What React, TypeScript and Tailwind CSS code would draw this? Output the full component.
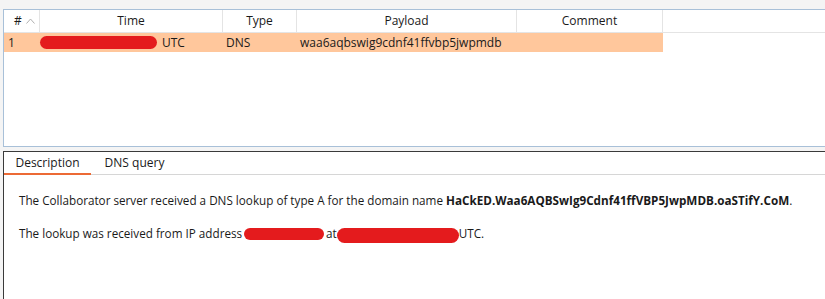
import React from 'react';

const font = { fontFamily: '"Open Sans", "Noto Sans", sans-serif' };

const columns = [
  { label: 'Time', width: 'w-[183px]' },
  { label: 'Type', width: 'w-[74px]' },
  { label: 'Payload', width: 'w-[220px]' },
  { label: 'Comment', width: 'w-[146px]' },
];

function Scribble({ className }: { className: string }) {
  return <span className={'inline-block rounded-full bg-[#e41b1d] align-middle ' + className} />;
}

export default function App() {
  return (
    <div
      className="w-[825px] h-[299px] overflow-hidden bg-[#f4f4f4] pt-[9px] pl-[3px] flex flex-col text-[12px] text-[#1a1a1a]"
      style={font}
    >
      {/* results table */}
      <div className="h-[138px] shrink-0 bg-white border-t border-l border-b border-[#a8c0d8]">
        <div className="flex h-[23px] border-b border-[#e4e4e4]">
          <div className="w-[36px] flex items-center pl-[10px] gap-[4px] border-r border-[#e4e4e4]">
            <span>#</span>
            <svg width="9" height="6" viewBox="0 0 9 6" fill="none" stroke="#b0b0b0" strokeWidth="1">
              <path d="M0.5 5.5 L4.5 1 L8.5 5.5" />
            </svg>
          </div>
          {columns.map((c) => (
            <div key={c.label} className={c.width + ' flex items-center justify-center border-r border-[#e4e4e4]'}>
              {c.label}
            </div>
          ))}
        </div>
        <div className="flex h-[19px] w-[659px] bg-[#ffc79c] items-center">
          <div className="w-[36px] pl-[4px]">1</div>
          <div className="w-[183px] flex items-center">
            <Scribble className="w-[117px] h-[13px]" />
            <span className="ml-[5px]">UTC</span>
          </div>
          <div className="w-[74px] pl-[3px]">DNS</div>
          <div className="w-[220px] pl-[3px]">waa6aqbswig9cdnf41ffvbp5jwpmdb</div>
        </div>
      </div>

      {/* details */}
      <div className="mt-[4px] flex-1 bg-white border-t border-l border-[#3a3a3a]">
        <div className="flex h-[23px] border-b border-[#d6d6d6]">
          <div className="w-[87px] flex items-center justify-center border-b-2 border-[#ec6a35] -mb-px">Description</div>
          <div className="w-[87px] flex items-center justify-center">DNS query</div>
        </div>
        <div className="pl-[15px] pt-[17px] text-[11.7px] whitespace-nowrap">
          <p className="h-[32px]">
            The Collaborator server received a DNS lookup of type A for the domain name{' '}
            <b className="font-bold">HaCkED.Waa6AQBSwIg9Cdnf41ffVBP5JwpMDB.oaSTifY.CoM</b>.
          </p>
          <p className="flex items-center">
            <span>The lookup was received from IP address</span>
            <Scribble className="w-[80px] h-[12px] ml-[2px]" />
            <span className="ml-[2px]">at</span>
            <Scribble className="w-[122px] h-[15px] mt-[4px]" />
            <span>UTC.</span>
          </p>
        </div>
      </div>
    </div>
  );
}
